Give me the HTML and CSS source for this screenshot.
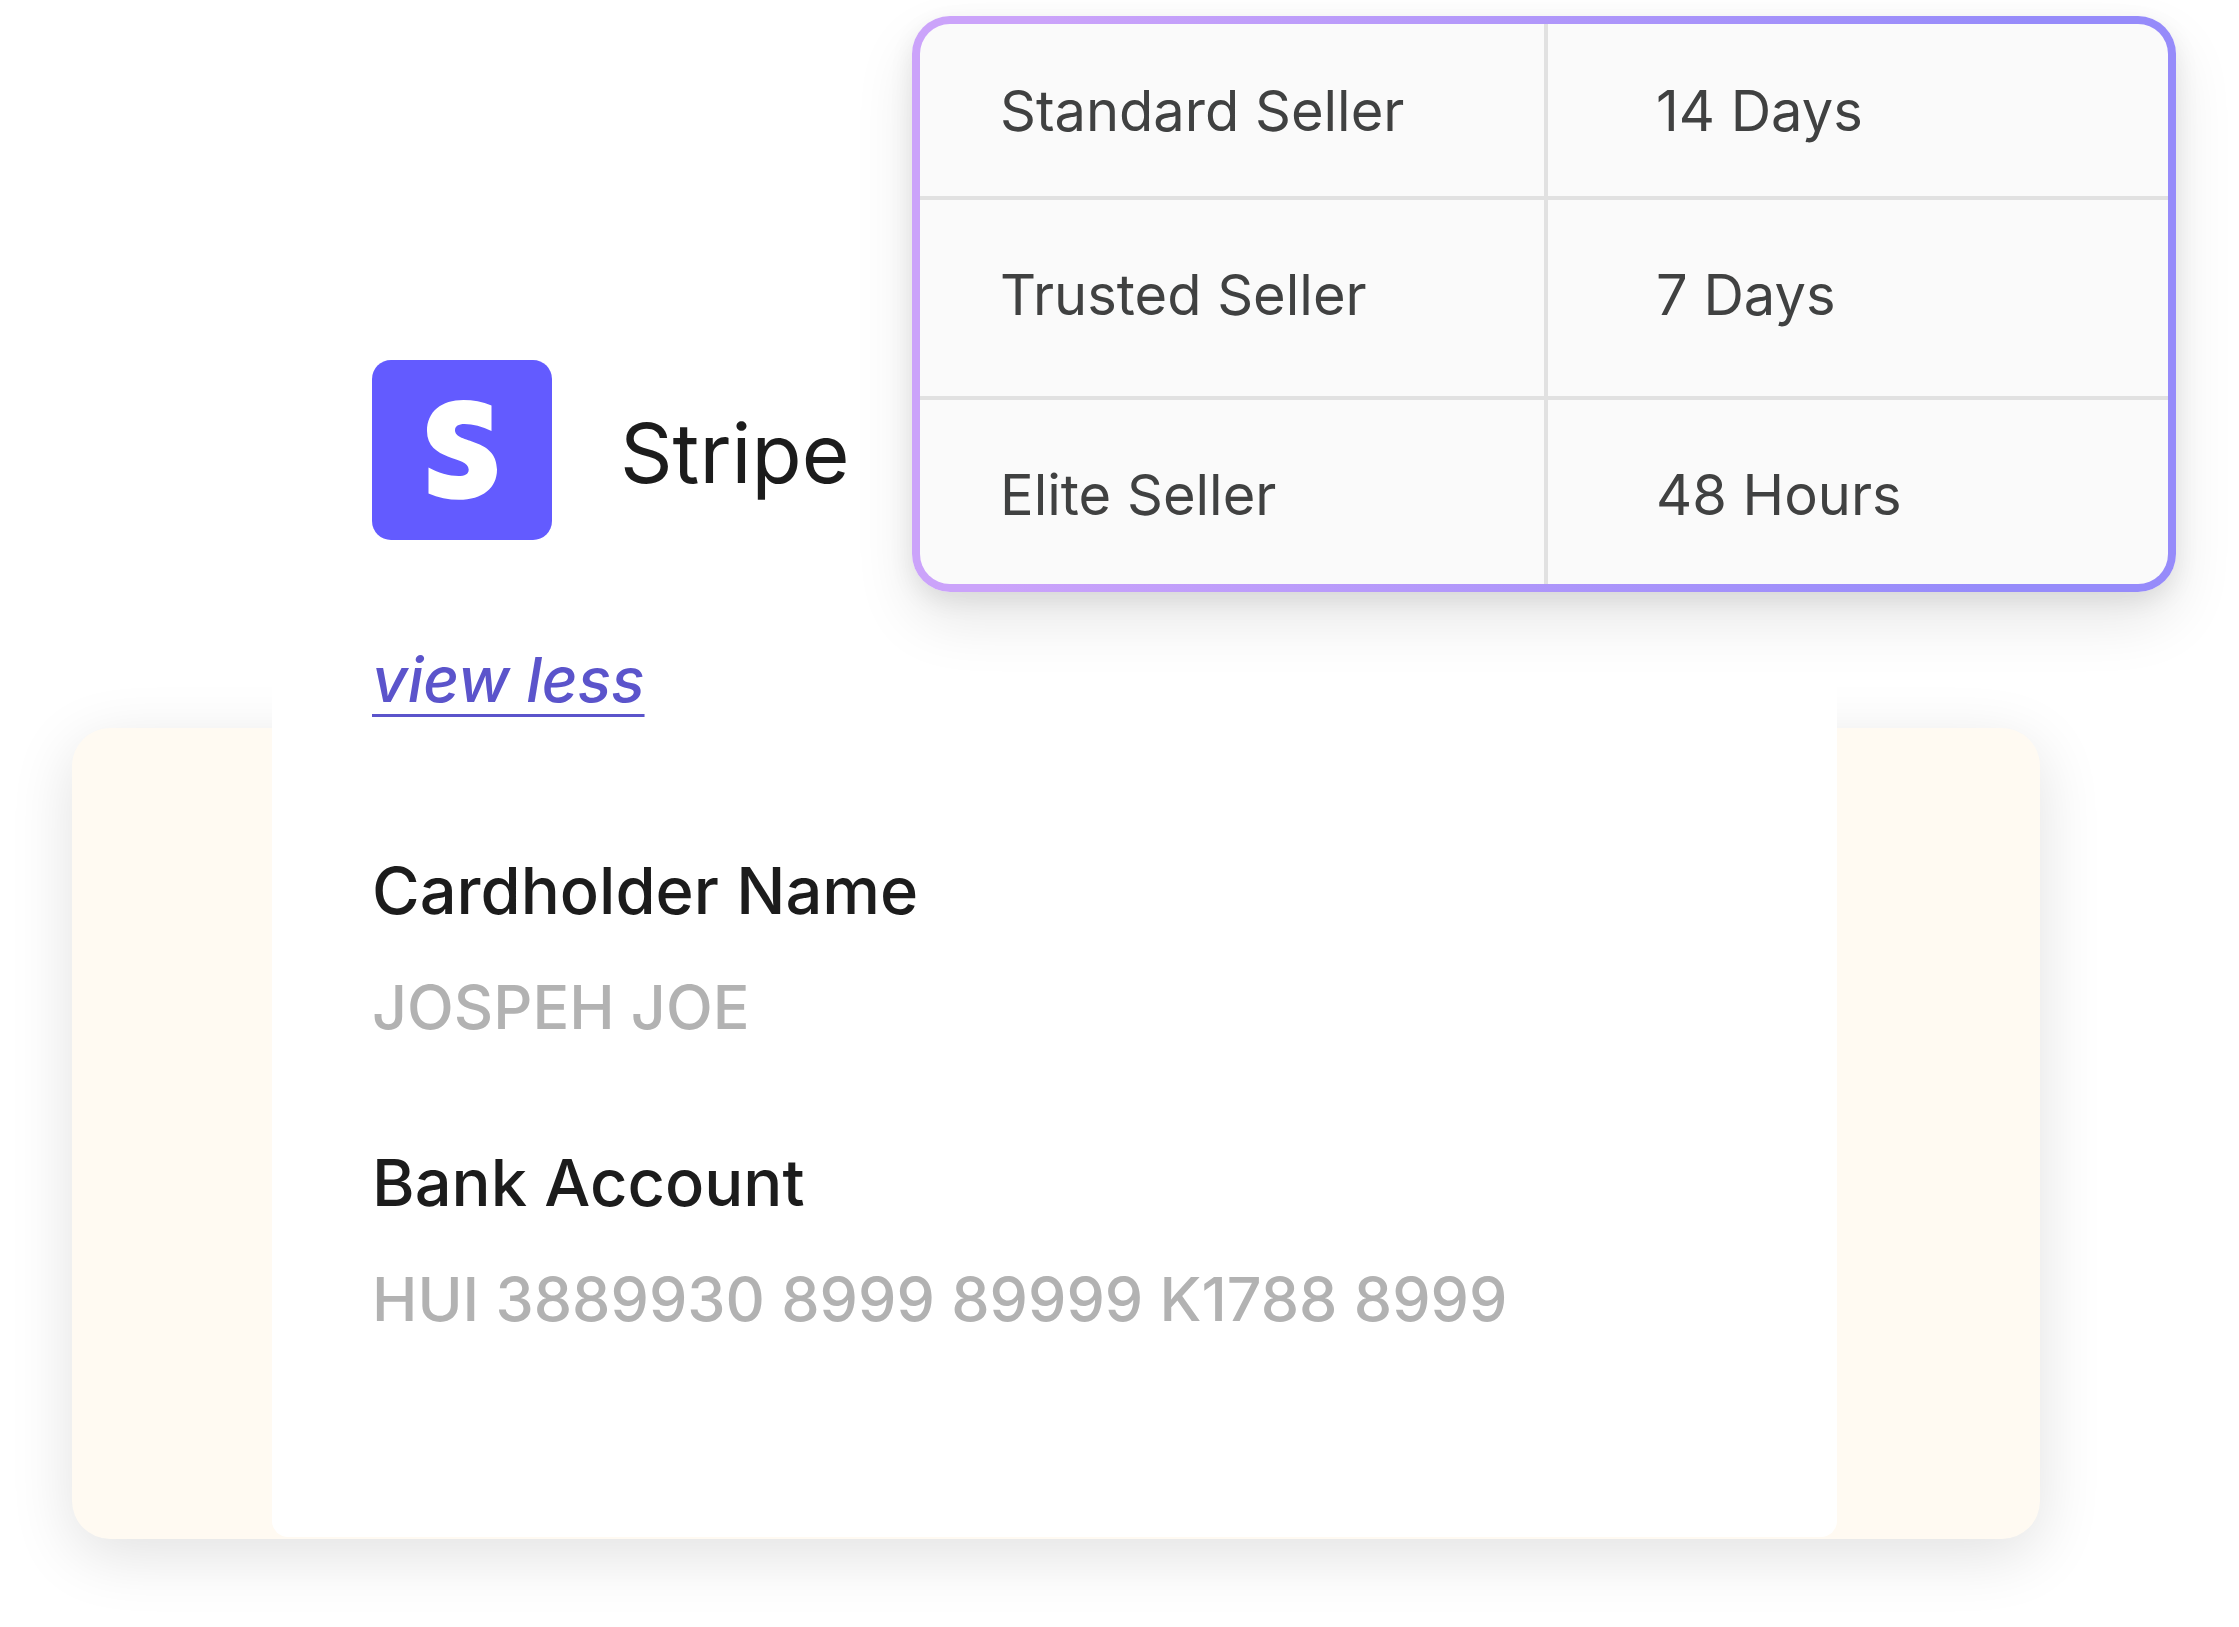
FILE: index.html
```html
<!DOCTYPE html>
<html lang="en">
<head>
  <meta charset="utf-8">
  <meta name="viewport" content="width=device-width, initial-scale=1">
  <title>Stripe payout details</title>
  <link rel="stylesheet" href="styles.css">
</head>
<body>
  <main class="stage">
    <div class="backdrop"></div>

    <section class="account">
      <header class="provider">
        <svg class="provider-logo" viewBox="0 0 180 180" aria-hidden="true">
          <rect width="180" height="180" rx="19" fill="#635bff"/>
          <path fill="#fff" d="M119.500 45.500V71C110 66.500 101 64 92.500 64C86.500 64 83 66.200 83 70.200C83 84 125 77 125 109.500C125 128 110.500 139.800 87 139.800C76.500 139.800 66 137.800 56.500 133.500V107.500C65.500 112.500 77.500 116 86.500 116C92.700 116 96.700 114.300 96.700 109.500C96.700 95.500 55 101.500 55 71C55 51.500 69.500 40 91.500 40C101 40 110.500 41.700 119.500 45.500Z"/>
        </svg>
        <h1 class="provider-name">Stripe</h1>
      </header>

      <a class="toggle" href="#details">view less</a>

      <dl class="details" id="details">
        <div class="detail">
          <dt>Cardholder Name</dt>
          <dd>JOSPEH JOE</dd>
        </div>
        <div class="detail">
          <dt>Bank Account</dt>
          <dd>HUI 3889930 8999 89999 K1788 8999</dd>
        </div>
      </dl>
    </section>

    <section class="tiers">
      <table class="tiers-table">
        <tbody>
          <tr><th scope="row">Standard Seller</th><td>14 Days</td></tr>
          <tr><th scope="row">Trusted Seller</th><td>7 Days</td></tr>
          <tr><th scope="row">Elite Seller</th><td>48 Hours</td></tr>
        </tbody>
      </table>
    </section>
  </main>
</body>
</html>
```
FILE: styles.css
```css
* {
  box-sizing: border-box;
}

body {
  margin: 0;
  background: #fff;
  color: #1c1c1c;
  font-family: Inter, "Liberation Sans", sans-serif;
}

/* The backdrop, the account card and the tier table share grid cells. */
.stage {
  display: grid;
  grid-template-columns: 72px 200px minmax(0, 1fr) 203px 199px;
  grid-template-rows: 728px auto;
  padding-bottom: 87px;
}

.backdrop {
  grid-area: 2 / 2 / 3 / 5;
  border-radius: 38px;
  background: #fffaf2;
  box-shadow: 0 16px 64px rgba(0, 0, 0, 0.12);
}

.account {
  grid-area: 1 / 3 / 3 / 4;
  margin-bottom: 2px;
  padding: 360px 100px 202px;
  border-radius: 16px;
  background: #fff;
}

.provider {
  display: flex;
  align-items: center;
  gap: 68px;
}

.provider-logo {
  width: 180px;
  height: 180px;
}

.provider-name {
  margin: 0;
  padding-top: 8px;
  font-size: 82px;
  font-weight: 400;
  line-height: 100px;
}

.toggle {
  display: block;
  width: fit-content;
  margin-top: 104px;
  color: #5b54cb;
  font-size: 62px;
  font-style: italic;
  font-weight: 500;
  line-height: 72px;
  text-decoration: underline;
  text-decoration-thickness: 3px;
  text-underline-offset: 12px;
}

.details {
  display: grid;
  gap: 104px;
  margin: 139px 0 0;
}

.detail {
  display: grid;
  gap: 44px;
}

.detail dt,
.detail dd {
  margin: 0;
  font-weight: 500;
  line-height: 72px;
}

.detail dt {
  font-size: 65px;
}

.detail dd {
  color: #b2b2b2;
  font-size: 61px;
}

.tiers {
  grid-area: 1 / 3 / 2 / 6;
  align-self: start;
  margin: 16px 63px 0 640px;
  overflow: hidden;
  border: 8px solid transparent;
  border-radius: 38px;
  background:
    linear-gradient(#fafafa, #fafafa) padding-box,
    linear-gradient(95deg, #cba3fa 10%, #968bfa 85%) border-box;
  box-shadow:
    0 28px 60px rgba(0, 0, 0, 0.1),
    0 8px 24px rgba(0, 0, 0, 0.08);
}

.tiers-table {
  width: 100%;
  border-spacing: 0;
  table-layout: fixed;
  color: #404141;
  font-size: 56px;
  line-height: 68px;
}

.tiers-table th,
.tiers-table td {
  padding: 61px 0 67px;
  border-bottom: 4px solid #e1e1e1;
  font-weight: 400;
  text-align: left;
}

.tiers-table th {
  padding-left: 80px;
}

.tiers-table td {
  padding-left: 108px;
  border-left: 4px solid #e1e1e1;
}

.tiers-table tr:first-child > * {
  padding-top: 53px;
  padding-bottom: 51px;
}

.tiers-table tr:last-child > * {
  padding-bottom: 55px;
  border-bottom: 0;
}
```
